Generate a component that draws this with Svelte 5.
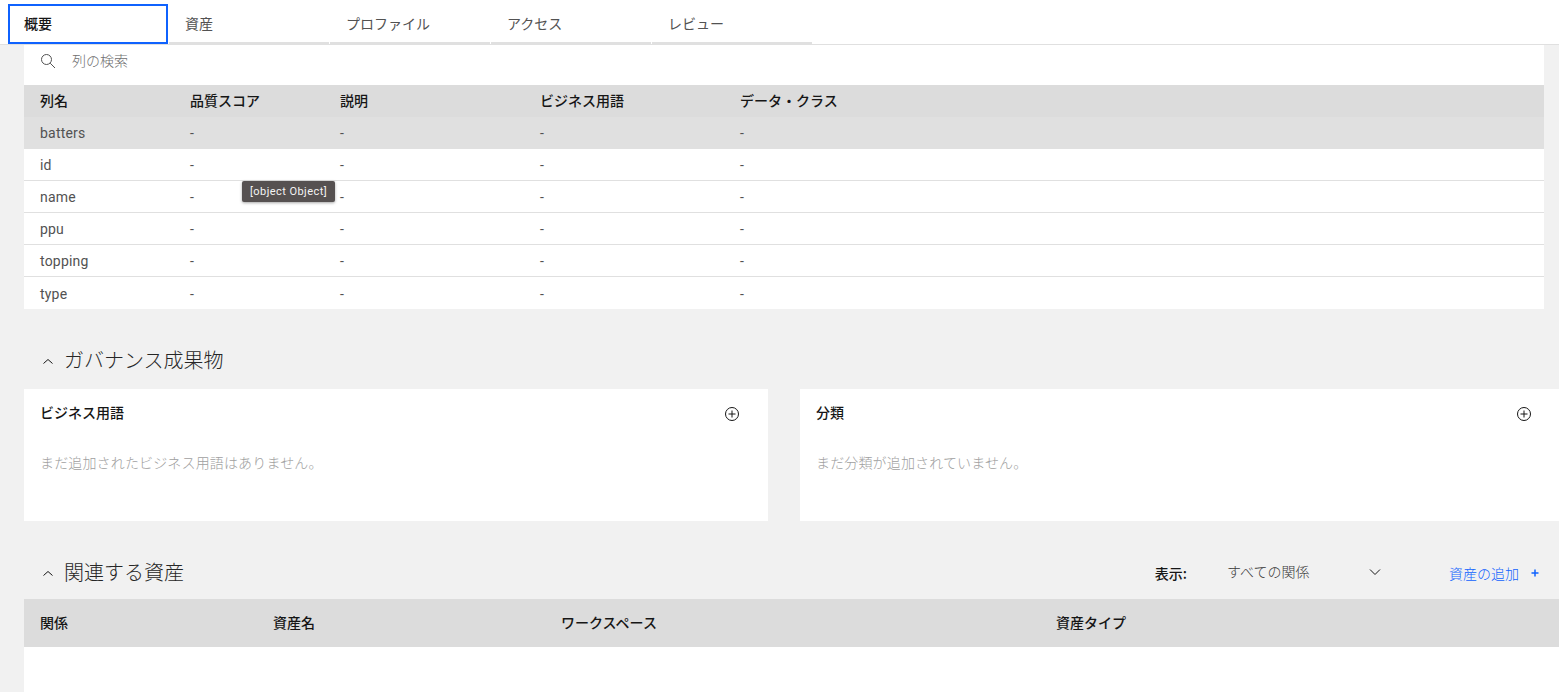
<script>
	const tabs = ['概要', '資産', 'プロファイル', 'アクセス', 'レビュー'];
	const columns = ['列名', '品質スコア', '説明', 'ビジネス用語', 'データ・クラス'];
	const rows = ['batters', 'id', 'name', 'ppu', 'topping', 'type'];
	const relatedColumns = ['関係', '資産名', 'ワークスペース', '資産タイプ'];
</script>

<div class="page">
	<nav class="tabs">
		{#each tabs as tab, i}
			<div class="tab" class:selected={i === 0}>{tab}</div>
		{/each}
	</nav>

	<main class="content">
		<section class="table-card">
			<div class="search">
				<svg width="16" height="16" viewBox="0 0 16 16" fill="none" stroke="#525252" stroke-width="1">
					<circle cx="6.5" cy="6.5" r="5" />
					<path d="M10.2 10.2L15 15" />
				</svg>
				<span>列の検索</span>
			</div>
			<div class="grid-row head">
				{#each columns as col}
					<div>{col}</div>
				{/each}
			</div>
			{#each rows as row, i}
				<div class="grid-row body" class:hovered={i === 0} class:last={i === rows.length - 1}>
					<div>{row}</div>
					<div>-</div>
					<div>-</div>
					<div>-</div>
					<div>-</div>
				</div>
			{/each}
			<div class="tooltip">[object Object]</div>
		</section>

		<header class="section-title governance">
			<svg class="chevron" width="16" height="16" viewBox="0 0 16 16" fill="none" stroke="#161616" stroke-width="1">
				<path d="M3.5 9.5L8 5.5l4.5 4" />
			</svg>
			<h2>ガバナンス成果物</h2>
		</header>

		<div class="cards">
			<article class="card first">
				<div class="card-head">
					<h3>ビジネス用語</h3>
					<svg width="16" height="16" viewBox="0 0 16 16" fill="none" stroke="#161616" stroke-width="1">
						<circle cx="8" cy="8" r="6.5" />
						<path d="M8 4.5v7M4.5 8h7" />
					</svg>
				</div>
				<p>まだ追加されたビジネス用語はありません。</p>
			</article>
			<article class="card second">
				<div class="card-head">
					<h3>分類</h3>
					<svg width="16" height="16" viewBox="0 0 16 16" fill="none" stroke="#161616" stroke-width="1">
						<circle cx="8" cy="8" r="6.5" />
						<path d="M8 4.5v7M4.5 8h7" />
					</svg>
				</div>
				<p>まだ分類が追加されていません。</p>
			</article>
		</div>

		<header class="section-title related">
			<svg class="chevron" width="16" height="16" viewBox="0 0 16 16" fill="none" stroke="#161616" stroke-width="1">
				<path d="M3.5 9.5L8 5.5l4.5 4" />
			</svg>
			<h2>関連する資産</h2>
			<div class="controls">
				<span class="show-label">表示:</span>
				<div class="select">
					<span>すべての関係</span>
					<svg width="16" height="16" viewBox="0 0 16 16" fill="none" stroke="#161616" stroke-width="1">
						<path d="M3 5.5l5 5 5-5" />
					</svg>
				</div>
				<div class="add-link">
					<span>資産の追加</span>
					<svg width="16" height="16" viewBox="0 0 16 16" fill="none" stroke="#0f62fe" stroke-width="1.5">
						<path d="M8 4.5v7M4.5 8h7" />
					</svg>
				</div>
			</div>
		</header>

		<section class="related-table">
			<div class="related-head">
				{#each relatedColumns as col}
					<div>{col}</div>
				{/each}
			</div>
		</section>
	</main>
</div>

<style>
	:global(body) {
		margin: 0;
		overflow: hidden;
	}

	.page {
		height: 692px;
		display: flex;
		flex-direction: column;
		background: #f1f1f1;
		color: #161616;
		font-family: 'Noto Sans CJK JP', sans-serif;
		font-size: 14px;
	}

	.tabs {
		height: 44px;
		flex: none;
		display: flex;
		gap: 1px;
		padding-left: 8px;
		background: #fff;
		border-bottom: 1px solid #e0e0e0;
	}

	.tab {
		width: 144px;
		height: 42px;
		padding-left: 16px;
		line-height: 46px;
		color: #525252;
		border-bottom: 2px solid #e0e0e0;
	}

	.tab.selected {
		box-sizing: border-box;
		width: 160px;
		height: 40px;
		margin-top: 4px;
		padding-left: 14px;
		line-height: 34px;
		font-weight: 500;
		color: #161616;
		border: 2px solid #0f62fe;
	}

	.content {
		flex: 1;
		min-height: 0;
		display: flex;
		flex-direction: column;
		padding-left: 24px;
	}

	.table-card {
		position: relative;
		width: 1520px;
		background: #fff;
	}

	.search {
		height: 40px;
		display: flex;
		align-items: center;
		gap: 16px;
		padding: 0 0 9px 16px;
		box-sizing: border-box;
		color: #6f6f6f;
		font-size: 14px;
		font-weight: 300;
	}

	.search span {
		position: relative;
		top: -1px;
	}

	.grid-row {
		display: grid;
		grid-template-columns: 150px 150px 200px 200px 1fr;
		align-items: center;
	}

	.grid-row > div {
		padding-left: 16px;
	}

	.head {
		height: 32px;
		box-sizing: border-box;
		padding-bottom: 2px;
		background: #dcdcdc;
		font-weight: 500;
	}

	.body {
		height: 32px;
		box-sizing: border-box;
		border-bottom: 1px solid #e0e0e0;
		color: #525252;
		font-family: 'Roboto', 'Noto Sans CJK JP', sans-serif;
		letter-spacing: 0.2px;
	}

	.body.hovered {
		border-bottom: none;
		background: #e0e0e0;
	}

	.body.last {
		border-bottom: none;
		padding-top: 2px;
	}

	.tooltip {
		position: absolute;
		left: 218px;
		top: 136px;
		width: 93px;
		height: 21px;
		text-align: center;
		line-height: 21px;
		font-family: 'Roboto', sans-serif;
		font-size: 11px;
		letter-spacing: 0.45px;
		color: #f4f4f4;
		background: #565151;
		border-radius: 2px;
		box-shadow: 0 1px 3px rgba(0, 0, 0, 0.35);
	}

	.section-title {
		display: flex;
		align-items: center;
	}

	.section-title h2 {
		position: relative;
		top: -1px;
	}

	.governance {
		height: 40px;
		margin-top: 31px;
		margin-bottom: 9px;
	}

	.related {
		height: 40px;
		margin-top: 31px;
		margin-bottom: 7px;
	}

	.chevron {
		margin-left: 16px;
		margin-right: 8px;
		margin-top: 3px;
	}

	h2 {
		margin: 0;
		font-size: 20px;
		font-weight: 300;
		color: #262626;
	}

	.cards {
		display: flex;
		gap: 32px;
	}

	.card {
		height: 132px;
		box-sizing: border-box;
		background: #fff;
		padding: 16px;
	}

	.first {
		width: 744px;
	}

	.second {
		width: 759px;
		padding-right: 27px;
	}

	.card-head {
		display: flex;
		align-items: center;
		justify-content: space-between;
		height: 18px;
		padding-right: 12px;
	}

	.card-head h3 {
		position: relative;
		top: -2px;
	}

	.second .card-head {
		padding-right: 0;
	}

	h3 {
		margin: 0;
		font-size: 14px;
		font-weight: 500;
	}

	.card p {
		margin: 29px 0 0;
		font-size: 14px;
		font-weight: 300;
		letter-spacing: 0.15px;
		color: #a0a0a0;
	}

	.controls {
		margin-left: auto;
		display: flex;
		align-items: center;
		padding-right: 16px;
		padding-top: 1px;
	}

	.show-label {
		font-weight: 500;
		font-size: 14px;
	}

	.select {
		width: 156px;
		margin-left: 40px;
		display: flex;
		align-items: center;
		justify-content: space-between;
		color: #393939;
		font-size: 14px;
		font-weight: 300;
	}

	.select span {
		position: relative;
		top: -2px;
	}

	.select svg {
		position: relative;
		top: -1px;
	}

	.add-link {
		display: flex;
		align-items: center;
		gap: 8px;
		margin-left: 66px;
		color: #0f62fe;
		font-size: 14px;
		font-weight: 300;
	}

	.related-table {
		flex: 1;
		width: 1535px;
		background: #fff;
	}

	.related-head {
		height: 48px;
		box-sizing: border-box;
		padding-bottom: 2px;
		display: grid;
		grid-template-columns: 233px 288px 495px 1fr;
		align-items: center;
		background: #dcdcdc;
		font-weight: 500;
	}

	.related-head > div {
		padding-left: 16px;
	}
</style>
